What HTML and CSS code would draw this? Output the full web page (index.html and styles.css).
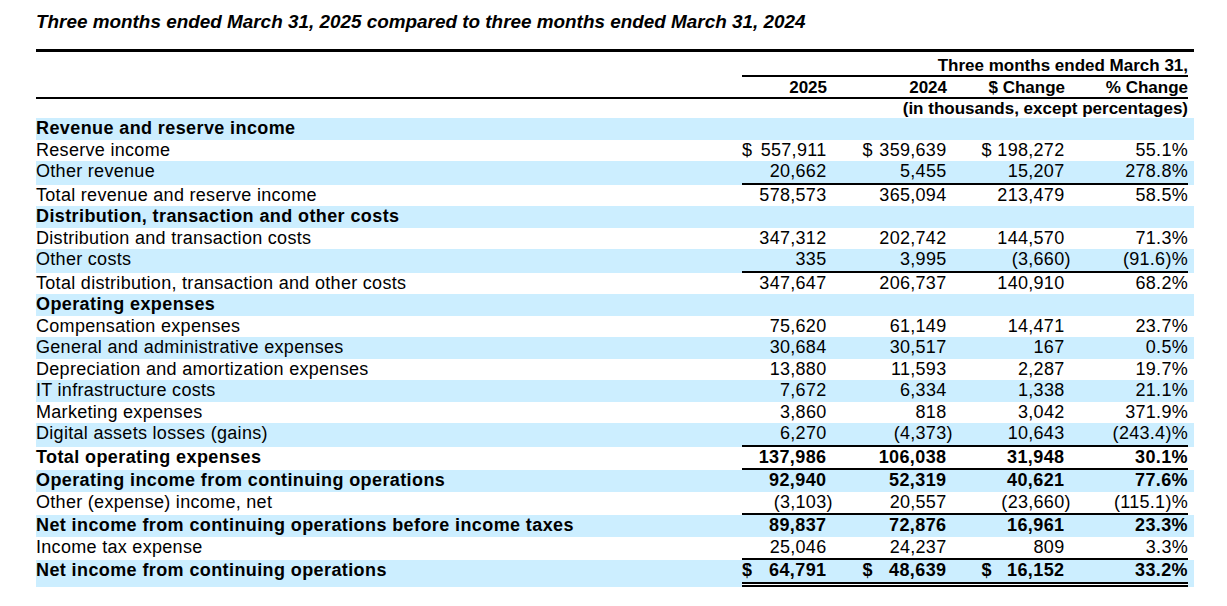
FILE: index.html
```html
<!DOCTYPE html>
<html lang="en">
<head>
<meta charset="utf-8">
<title>Three months ended March 31, 2025 compared to three months ended March 31, 2024</title>
<link rel="stylesheet" href="styles.css">
</head>
<body>
<div class="page">
  <div class="title">Three months ended March 31, 2025 compared to three months ended March 31, 2024</div>
  <table class="fin">
    <colgroup>
      <col class="w-lab"><col class="w-c1"><col class="w-c2"><col class="w-c3"><col class="w-c4"><col class="w-pad">
    </colgroup>
    <thead>
      <tr class="h1">
        <td></td>
        <td class="span" colspan="4">Three months ended March 31,</td>
        <td></td>
      </tr>
      <tr class="h2">
        <td class="rule"></td>
        <td class="num rule">2025</td>
        <td class="num rule">2024</td>
        <td class="num rule">$ Change</td>
        <td class="pct rule">% Change</td>
        <td></td>
      </tr>
      <tr class="h3">
        <td></td>
        <td class="span" colspan="4">(in thousands, except percentages)</td>
        <td></td>
      </tr>
    </thead>
    <tbody>
      <tr class="b bold"><td>Revenue and reserve income</td><td></td><td></td><td></td><td></td><td></td></tr>
      <tr>
        <td>Reserve income</td>
        <td class="num c1"><div class="dl"><span>$</span><span>557,911</span></div></td>
        <td class="num c2"><div class="dl"><span>$</span><span>359,639</span></div></td>
        <td class="num c3"><div class="dl"><span>$</span><span>198,272</span></div></td>
        <td class="pct">55.1%</td><td></td>
      </tr>
      <tr class="b ul">
        <td>Other revenue</td>
        <td class="num">20,662</td><td class="num">5,455</td><td class="num">15,207</td><td class="pct">278.8%</td><td></td>
      </tr>
      <tr>
        <td>Total revenue and reserve income</td>
        <td class="num">578,573</td><td class="num">365,094</td><td class="num">213,479</td><td class="pct">58.5%</td><td></td>
      </tr>
      <tr class="b bold"><td>Distribution, transaction and other costs</td><td></td><td></td><td></td><td></td><td></td></tr>
      <tr>
        <td>Distribution and transaction costs</td>
        <td class="num">347,312</td><td class="num">202,742</td><td class="num">144,570</td><td class="pct">71.3%</td><td></td>
      </tr>
      <tr class="b ul">
        <td>Other costs</td>
        <td class="num">335</td><td class="num">3,995</td><td class="num">(3,660<span class="rp">)</span></td><td class="pct">(91.6)%</td><td></td>
      </tr>
      <tr>
        <td>Total distribution, transaction and other costs</td>
        <td class="num">347,647</td><td class="num">206,737</td><td class="num">140,910</td><td class="pct">68.2%</td><td></td>
      </tr>
      <tr class="b bold"><td>Operating expenses</td><td></td><td></td><td></td><td></td><td></td></tr>
      <tr>
        <td>Compensation expenses</td>
        <td class="num">75,620</td><td class="num">61,149</td><td class="num">14,471</td><td class="pct">23.7%</td><td></td>
      </tr>
      <tr class="b">
        <td>General and administrative expenses</td>
        <td class="num">30,684</td><td class="num">30,517</td><td class="num">167</td><td class="pct">0.5%</td><td></td>
      </tr>
      <tr>
        <td>Depreciation and amortization expenses</td>
        <td class="num">13,880</td><td class="num">11,593</td><td class="num">2,287</td><td class="pct">19.7%</td><td></td>
      </tr>
      <tr class="b">
        <td>IT infrastructure costs</td>
        <td class="num">7,672</td><td class="num">6,334</td><td class="num">1,338</td><td class="pct">21.1%</td><td></td>
      </tr>
      <tr>
        <td>Marketing expenses</td>
        <td class="num">3,860</td><td class="num">818</td><td class="num">3,042</td><td class="pct">371.9%</td><td></td>
      </tr>
      <tr class="b ul">
        <td>Digital assets losses (gains)</td>
        <td class="num">6,270</td><td class="num">(4,373<span class="rp">)</span></td><td class="num">10,643</td><td class="pct">(243.4)%</td><td></td>
      </tr>
      <tr class="bold ul">
        <td>Total operating expenses</td>
        <td class="num">137,986</td><td class="num">106,038</td><td class="num">31,948</td><td class="pct">30.1%</td><td></td>
      </tr>
      <tr class="b bold">
        <td>Operating income from continuing operations</td>
        <td class="num">92,940</td><td class="num">52,319</td><td class="num">40,621</td><td class="pct">77.6%</td><td></td>
      </tr>
      <tr class="ul">
        <td>Other (expense) income, net</td>
        <td class="num">(3,103<span class="rp">)</span></td><td class="num">20,557</td><td class="num">(23,660<span class="rp">)</span></td><td class="pct">(115.1)%</td><td></td>
      </tr>
      <tr class="b bold">
        <td>Net income from continuing operations before income taxes</td>
        <td class="num">89,837</td><td class="num">72,876</td><td class="num">16,961</td><td class="pct">23.3%</td><td></td>
      </tr>
      <tr class="ul">
        <td>Income tax expense</td>
        <td class="num">25,046</td><td class="num">24,237</td><td class="num">809</td><td class="pct">3.3%</td><td></td>
      </tr>
      <tr class="b bold dbl">
        <td>Net income from continuing operations</td>
        <td class="num c1"><div class="dl"><span>$</span><span>64,791</span></div></td>
        <td class="num c2"><div class="dl"><span>$</span><span>48,639</span></div></td>
        <td class="num c3"><div class="dl"><span>$</span><span>16,152</span></div></td>
        <td class="pct">33.2%</td><td></td>
      </tr>
    </tbody>
  </table>
</div>
</body>
</html>
```
FILE: styles.css
```css
html, body {
  margin: 0;
  padding: 0;
  background: #ffffff;
  color: #000000;
  font-family: "Liberation Sans", Arial, sans-serif;
}

.page {
  padding: 11px 0 0 36px;
}

.title {
  font-size: 18.9px;
  font-weight: bold;
  font-style: italic;
  line-height: 22px;
  margin: 0 0 16px 0;
  white-space: nowrap;
}

.fin {
  border-collapse: separate;
  border-spacing: 0;
  table-layout: fixed;
  width: 1158px;
  font-size: 18px;
  letter-spacing: 0.3px;
}

.w-lab { width: 706px; }
.w-c1 { width: 91px; }
.w-c2 { width: 120px; }
.w-c3 { width: 118px; }
.w-c4 { width: 117px; }
.w-pad { width: 6px; }

.fin td {
  padding: 1px 0 1.5px 0;
  line-height: 19px;
  white-space: nowrap;
  vertical-align: top;
  text-align: left;
}

/* header */
.fin thead td {
  font-size: 17px;
  font-weight: bold;
  letter-spacing: 0;
}

.fin .h1 td {
  border-top: 3px solid #000;
  padding: 5px 0 0 0;
  line-height: 18px;
}

.fin .h1 td.span {
  border-bottom: 2px solid #000;
  text-align: right;
}

.fin .h2 td {
  padding: 1px 0 0 0;
}

.fin .h2 td.rule {
  border-bottom: 2px solid #000;
}

.fin .h3 td {
  padding: 0;
}

.fin .h3 td.span {
  text-align: right;
}

/* numeric cells */
.fin td.num {
  text-align: right;
  padding-right: 6.5px;
}

.fin td.pct {
  text-align: right;
  padding-right: 0;
}

.fin .h2 td.num { padding-right: 6px; }
.fin .h2 td.pct { padding-right: 0; }

.rp {
  margin-right: -6.3px;
}

.dl {
  display: flex;
  justify-content: space-between;
}

.fin td.c2 .dl { margin-left: 29.5px; }
.fin td.c3 .dl { margin-left: 28.5px; }

/* rows */
.fin tr.b td {
  background: #cceeff;
}

.fin tr.bold td {
  font-weight: bold;
  letter-spacing: 0.4px;
}

.fin tr.ul td.num,
.fin tr.ul td.pct {
  border-bottom: 2px solid #000;
}

.fin tr.dbl td.num,
.fin tr.dbl td.pct {
  border-bottom: 5px double #000;
}

.fin tr.dbl td {
  background-clip: padding-box;
}
```
